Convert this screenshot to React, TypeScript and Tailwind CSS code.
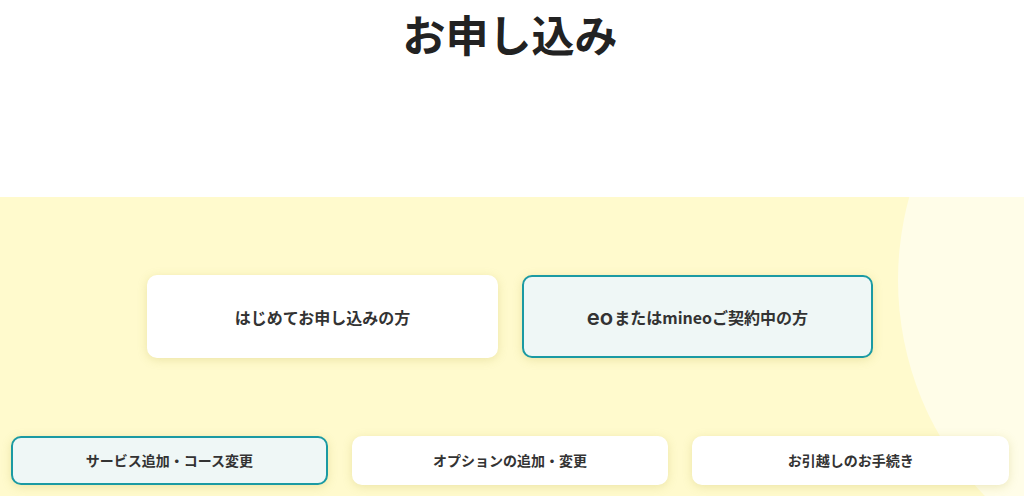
import React from 'react'

const jp = { fontFamily: '"Noto Sans CJK JP", "Noto Sans", sans-serif' }

interface Item {
  label: string
  active?: boolean
}

const subItems: Item[] = [
  { label: 'サービス追加・コース変更', active: true },
  { label: 'オプションの追加・変更' },
  { label: 'お引越しのお手続き' },
]

function Card({ active, className, children }: { active?: boolean; className: string; children: React.ReactNode }) {
  return (
    <button
      className={
        'flex items-center justify-center rounded-[10px] shadow-[0_2px_10px_rgba(180,170,60,0.25)] text-[#333] ' +
        (active ? 'bg-[#eff7f6] border-2 border-[#1b9aa3] ' : 'bg-white border-2 border-white ') +
        className
      }
    >
      {children}
    </button>
  )
}

export default function App() {
  return (
    <div className="w-[1024px] h-[496px] overflow-hidden bg-white" style={jp}>
      <div className="h-[197px] w-[1020px] flex justify-center">
        <h1 className="mt-[7px] text-[43px] leading-[52px] font-bold text-[#222]">お申し込み</h1>
      </div>
      <section className="relative h-[299px] bg-[#fffacd] overflow-hidden">
        {/* decorative light circle on the right */}
        <div className="absolute left-[898px] top-[-229px] w-[624px] h-[624px] rounded-full bg-[#fffde8]" />
        <div className="relative w-[1020px] pt-[78px] flex flex-col items-center">
          <div className="flex gap-6">
            <Card className="w-[351px] h-[83px] text-[16px] font-bold">はじめてお申し込みの方</Card>
            <Card active className="w-[351px] h-[83px] text-[16px] font-bold">
              <span className="text-[22px] leading-none mr-[1px]" style={{ fontFamily: 'Inter, "Noto Sans", sans-serif', fontWeight: 600 }}>
                eo
              </span>
              またはmineoご契約中の方
            </Card>
          </div>
          <div className="mt-[78px] grid grid-cols-3 gap-6 w-[998px]">
            {subItems.map((item) => (
              <Card key={item.label} active={item.active} className="h-[49px] text-[14px] font-semibold">
                {item.label}
              </Card>
            ))}
          </div>
        </div>
      </section>
    </div>
  )
}
